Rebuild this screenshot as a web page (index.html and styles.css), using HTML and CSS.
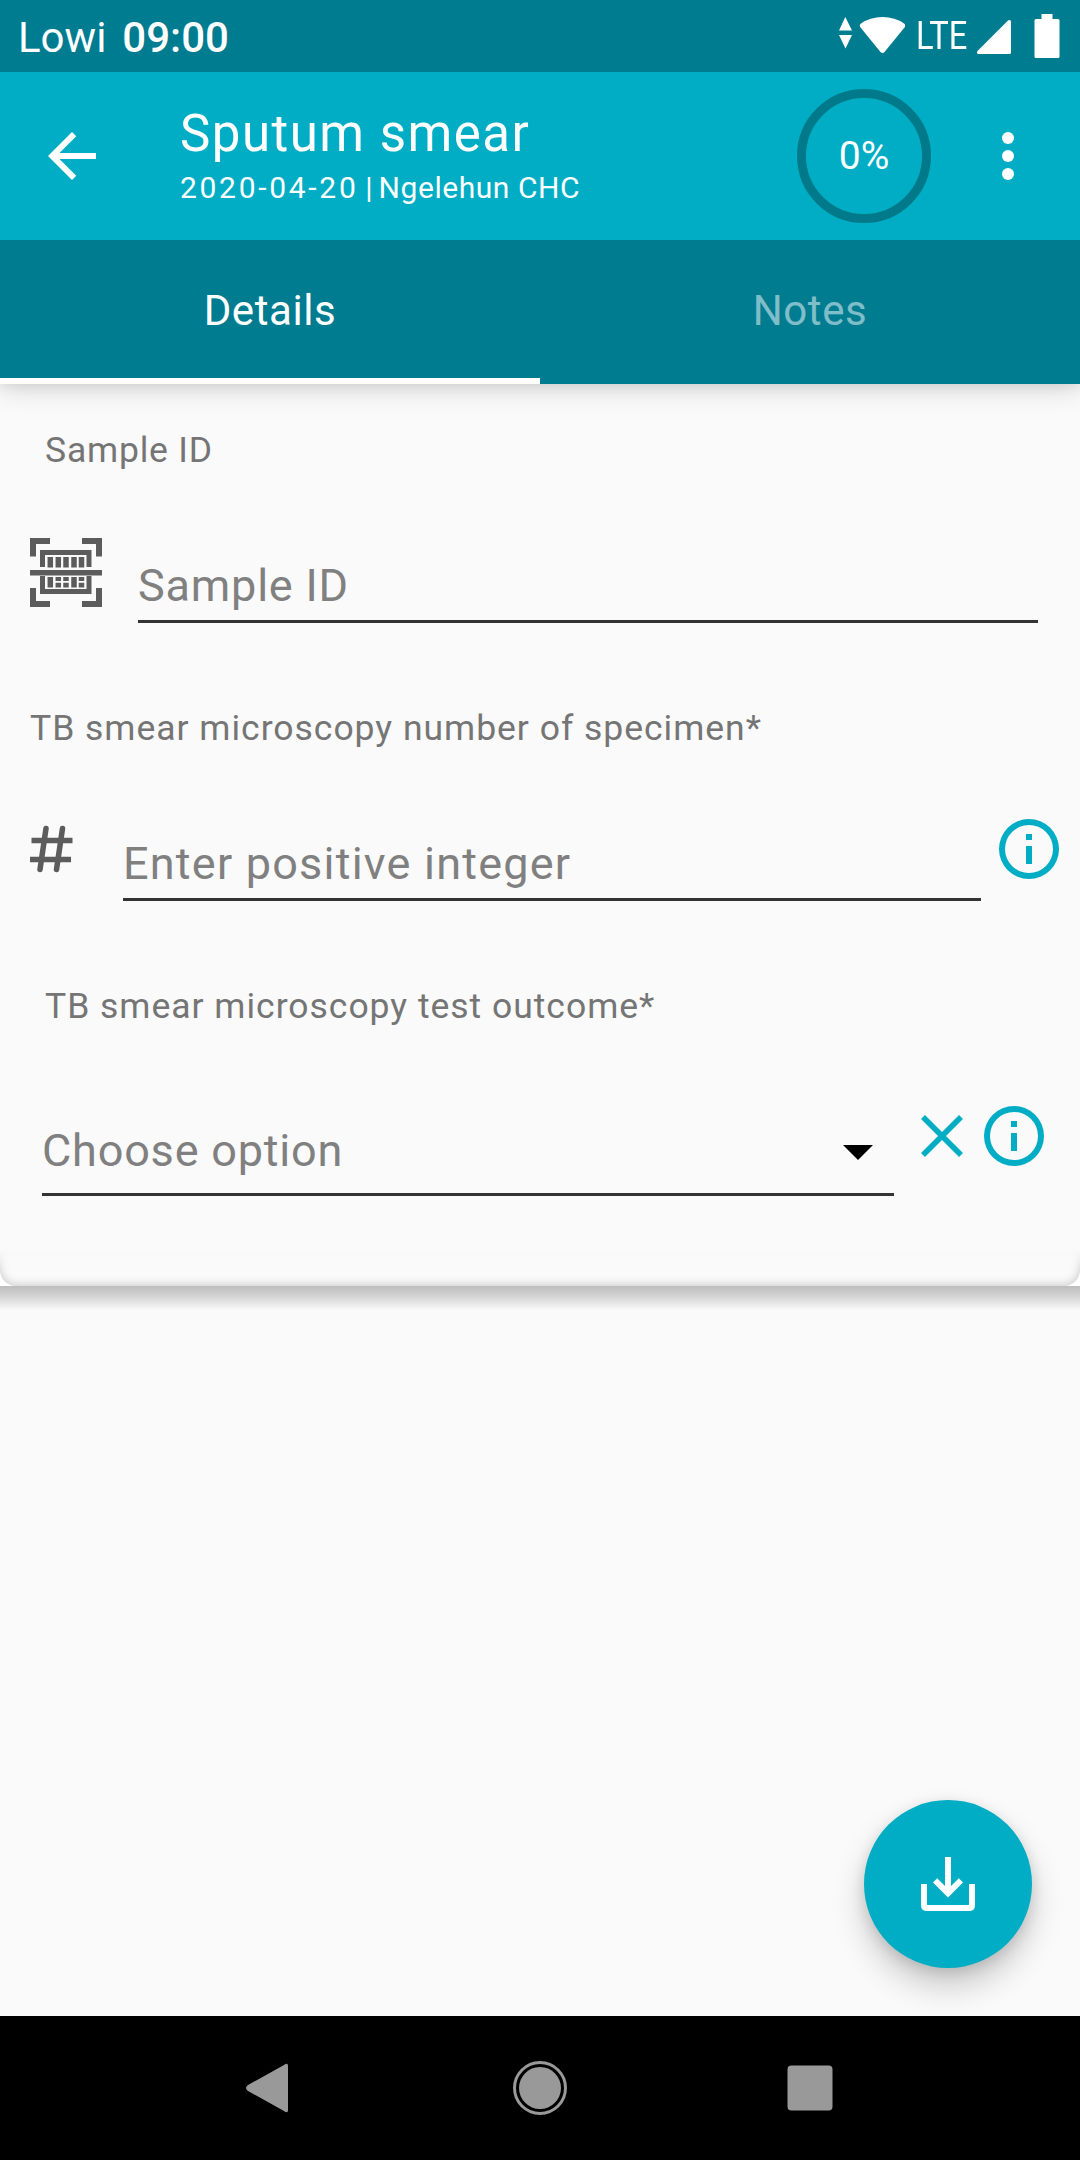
FILE: index.html
```html
<!DOCTYPE html>
<html lang="en">
<head>
<meta charset="utf-8">
<title>Sputum smear</title>
<link rel="stylesheet" href="styles.css">
</head>
<body>
<div class="status-bar">
  <div class="status-left"><span class="carrier">Lowi</span><span class="clock">09:00</span></div>
  <div class="status-right">
    <svg class="icon-wifi" width="68" height="72" viewBox="0 0 68 72" fill="#fff"><path d="M8.300 17 15 30.500H2zM2 35h13L8.500 48.500z"/><path d="M23.500 27.500Q22 25 24 23.500 33 17 45.500 17T67 23.500Q69 25 67.500 27.500L47.500 52Q45.500 54 43.500 52z"/></svg>
    <span class="lte">LTE</span>
    <svg class="icon-signal" width="36" height="72" viewBox="0 0 36 72" fill="#fff"><path d="M32 20.500Q35 19 35 22V52.500Q35 54 33.500 54H2Q0 53 1.500 51z"/></svg>
    <svg class="icon-battery" width="26" height="72" viewBox="0 0 26 72" fill="#fff"><path d="M7.500 14h11v5H24q1.500 0 1.500 1.500v36Q25.500 58 24 58H2Q.5 58 .5 56.500v-36Q.5 19 2 19h5.500z"/></svg>
  </div>
</div>
<header class="app-bar">
  <svg class="back" width="72" height="72" viewBox="0 0 24 24" fill="#fff"><path d="M20 11H7.830l5.590-5.590L12 4l-8 8 8 8 1.410-1.410L7.830 13H20z"/></svg>
  <div class="heading">
    <h1 class="title">Sputum smear</h1>
    <p class="subtitle"><span class="date">2020-04-20</span><span class="divider"> | </span>Ngelehun CHC</p>
  </div>
  <div class="progress">0%</div>
  <svg class="more" width="72" height="72" viewBox="0 0 24 24" fill="#fff"><circle cx="12" cy="6" r="2"/><circle cx="12" cy="12" r="2"/><circle cx="12" cy="18" r="2"/></svg>
</header>
<nav class="tabs">
  <div class="tab active">Details</div>
  <div class="tab">Notes</div>
</nav>
<main class="content">
  <section class="form">
    <div class="label first inset">Sample ID</div>
    <div class="row sample-row">
      <svg class="scan" width="72" height="70" viewBox="0 0 72 70" fill="none" stroke="#5c5c5c"><path stroke-width="6" d="M20 3H3V18.500M52 3H69V18.500M3 50V66H20M52 66H69V50"/><path stroke-width="5" d="M12.500 29V14.500H59V29M12.500 38V53.500H59V38"/><path stroke-width="5.500" d="M0 34.700H72"/><path stroke-width="5.500" d="M20.300 19V29.500M28.300 19V29.500M36 19V29.500M44 19V29.500M51.500 19V29.500M20.300 39V49.500M44 39V49.500"/><path stroke-width="5.500" d="M28.300 39V43M36 39V43M51.500 39V43M28.300 44.700V49.500M36 44.700V49.500M51.500 44.700V49.500"/></svg>
      <div class="input">Sample ID</div>
    </div>
    <div class="label">TB smear microscopy number of specimen*</div>
    <div class="row number-row">
      <svg class="hash" width="44" height="48" viewBox="0 0 44 48" fill="none" stroke="#5c5c5c" stroke-width="5.500" stroke-linecap="round"><path d="M16 3.500 10 44.500M32.500 3.500 26.500 44.500"/><path stroke-linecap="butt" d="M1.500 15.500H42.500M0 34.500H41"/></svg>
      <div class="input wide">Enter positive integer</div>
      <svg class="info" width="72" height="72" viewBox="0 0 24 24" fill="#00adc5"><path d="M11 7h2v2h-2zm0 4h2v6h-2zm1-9a10 10 0 1 0 0 20 10 10 0 0 0 0-20zm0 18a8 8 0 1 1 0-16 8 8 0 0 1 0 16z"/></svg>
    </div>
    <div class="label inset">TB smear microscopy test outcome*</div>
    <div class="row option-row">
      <div class="input select"><span>Choose option</span><svg class="caret" width="30" height="15" viewBox="0 0 30 15"><path d="M0 0h30L15 15z"/></svg></div>
      <svg class="clear" width="42" height="42" viewBox="0 0 42 42" stroke="#00adc5" stroke-width="5.500"><path d="M2 2 40 40M40 2 2 40"/></svg>
      <svg class="info" width="72" height="72" viewBox="0 0 24 24" fill="#00adc5"><path d="M11 7h2v2h-2zm0 4h2v6h-2zm1-9a10 10 0 1 0 0 20 10 10 0 0 0 0-20zm0 18a8 8 0 1 1 0-16 8 8 0 0 1 0 16z"/></svg>
    </div>
    <div class="card-foot"><div class="card-edge"></div></div>
  </section>
  <div class="drop"></div>
  <button class="fab" aria-label="Save"><svg width="54" height="54" viewBox="0 0 54 54" fill="#fff"><path d="M24 0h6v29l7.800-7.800L42 25.500 27 40.500 12 25.500l4.200-4.300L24 29z"/><path d="M0 27h6v21h42V27h6v21q0 6-6 6H6q-6 0-6-6z"/></svg></button>
</main>
<footer class="nav-bar">
  <svg width="1080" height="144" viewBox="0 0 1080 144" fill="#999"><path d="M284 49Q288 46 288 50V94Q288 98 284 95L248 75Q244 72 248 69z"/><circle cx="540" cy="72" r="21"/><circle cx="540" cy="72" r="25.500" fill="none" stroke="#999" stroke-width="3"/><rect x="787.500" y="49.500" width="45" height="45" rx="4"/></svg>
</footer>
</body>
</html>
```
FILE: styles.css
```css
* { box-sizing: border-box; }
body {
  margin: 0;
  width: 1080px;
  height: 2160px;
  display: flex;
  flex-direction: column;
  overflow: hidden;
  background: #fafafa;
  font-family: Roboto, "Liberation Sans", sans-serif;
}
h1, p { margin: 0; font-weight: 400; }
svg { display: block; flex: none; }

.status-bar {
  height: 72px;
  display: flex;
  justify-content: space-between;
  background: #007c91;
  color: #fff;
  padding: 0 20px 0 18px;
}
.status-left { display: flex; gap: 16px; font-size: 42px; line-height: 75px; }
.clock { font-weight: 500; }
.status-right { display: flex; align-items: center; }
.lte {
  width: 52px;
  margin-left: 11px;
  font-size: 38px;
  line-height: 72px;
  transform: scaleX(.86);
  transform-origin: left;
}
.icon-signal { margin-left: 8px; }
.icon-battery { margin-left: 22px; }

.app-bar {
  position: relative;
  z-index: 1;
  height: 168px;
  display: flex;
  align-items: center;
  background: #00adc5;
  color: #fff;
  padding: 0 36px;
}
.heading { margin-left: 72px; flex: 1; }
.title { font-size: 51px; line-height: 60px; letter-spacing: 1.5px; }
.subtitle { font-size: 30px; line-height: 40px; letter-spacing: .55px; margin-top: 4px; }
.date { letter-spacing: 2.7px; }
.divider { letter-spacing: -.7px; }
.progress {
  width: 134px;
  height: 134px;
  border: 9px solid #007a8a;
  border-radius: 50%;
  font-size: 39px;
  display: flex;
  align-items: center;
  justify-content: center;
}
.more { margin-left: 41px; }

.tabs {
  position: relative;
  height: 144px;
  display: flex;
  background: #007c91;
  color: #fff;
  font-size: 42px;
  line-height: 142px;
  letter-spacing: .6px;
  text-align: center;
  box-shadow: 0 6px 24px rgba(0, 0, 0, .14), 0 3px 10px rgba(0, 0, 0, .06);
}
.tab { flex: 1; color: rgba(255, 255, 255, .5); }
.tab.active { color: #fff; border-bottom: 6px solid #fff; }

.content { flex: 1; display: flex; flex-direction: column; }
.form {
  height: 902px;
  padding-top: 42px;
  display: flex;
  flex-direction: column;
}
.label {
  margin-top: 81px;
  padding-left: 30px;
  font-size: 35.5px;
  line-height: 48px;
  letter-spacing: .98px;
  color: #757575;
}
.label.first { margin-top: 0; letter-spacing: .8px; }
.label.inset { padding-left: 45px; }
.row { display: flex; align-items: flex-start; margin-top: 64px; height: 85px; }
.input {
  flex: 1;
  align-self: flex-end;
  border-bottom: 3px solid #333;
  padding: 0 2px 4px 0;
  font-size: 45px;
  line-height: 60px;
  letter-spacing: .8px;
  color: #808080;
}
.input.wide { letter-spacing: 1.22px; }
.sample-row { padding: 0 42px 0 30px; gap: 36px; }
.number-row { padding: 0 15px 0 30px; }
.hash { margin: 9px 49px 0 0; }
.number-row .info { margin: -3px 0 0 12px; }
.option-row { height: 102px; padding-left: 42px; padding-right: 30px; }
.select { display: flex; align-items: center; justify-content: space-between; padding-bottom: 12px; }
.caret { margin: 2px 19px 0 0; }
.clear { margin: 21px 0 0 27px; }
.option-row .info { margin: 6px 0 0 15px; }

.card-foot {
  margin-top: auto;
  height: 36px;
  overflow: hidden;
  -webkit-mask-image: linear-gradient(transparent, #000 60%);
  mask-image: linear-gradient(transparent, #000 60%);
}
.card-edge {
  height: 36px;
  border-radius: 0 0 16px 16px;
  box-shadow: 0 0 0 16px #fff, inset 0 -1px 10px rgba(0, 0, 0, .2);
}
.drop { height: 24px; background: linear-gradient(#bdbdbd, #d8d8d8 50%, #fafafa); }

.fab {
  width: 168px;
  height: 168px;
  margin: auto 48px 48px auto;
  border: 0;
  padding: 0;
  border-radius: 50%;
  background: #00adc5;
  display: flex;
  align-items: center;
  justify-content: center;
  box-shadow: 0 18px 32px rgba(0, 0, 0, .2), 0 4px 14px rgba(0, 0, 0, .12);
}
.nav-bar { height: 144px; background: #000; }
```
